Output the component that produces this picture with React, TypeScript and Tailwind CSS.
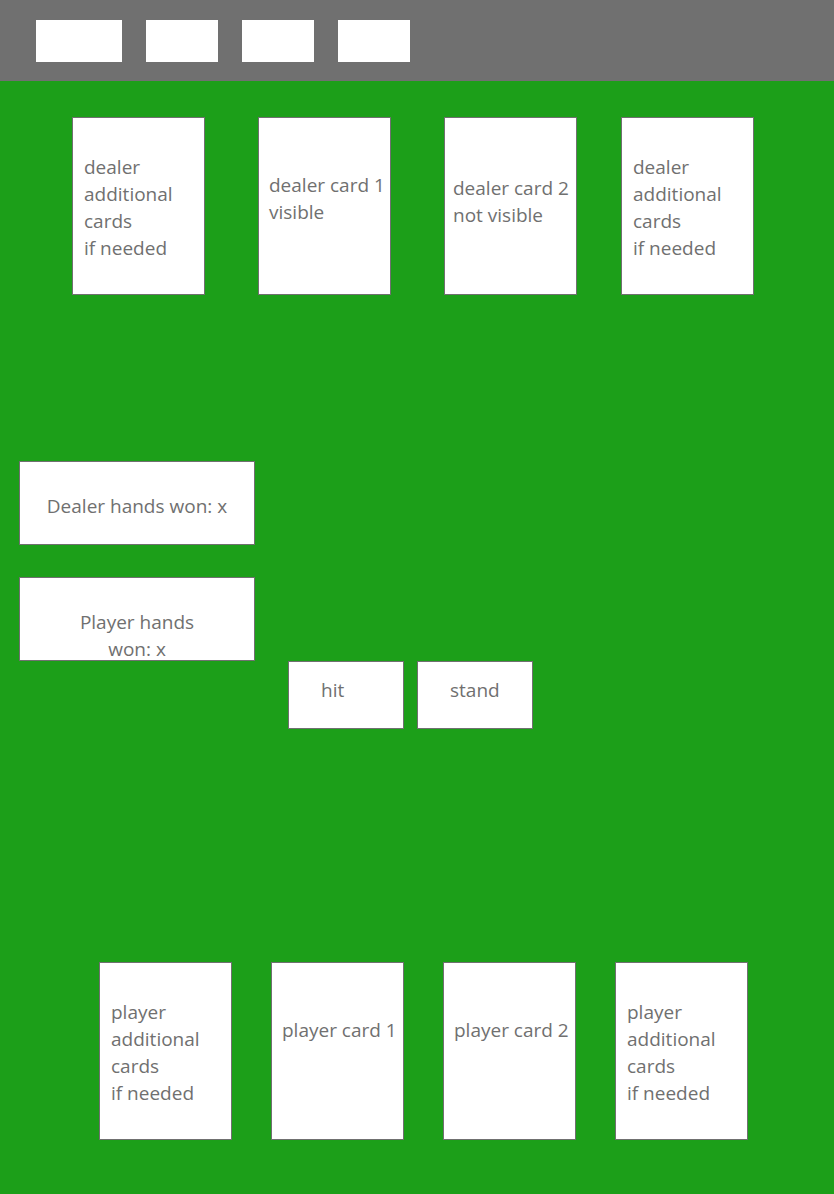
import type { ReactNode } from "react";
import clsx from "clsx";

function Card({ children, className }: { children: ReactNode; className: string }) {
  return (
    <article
      className={clsx(
        "h-[178px] w-[133px] shrink-0 border border-[#707070] bg-white whitespace-nowrap",
        className,
      )}
    >
      <p>{children}</p>
    </article>
  );
}

function AdditionalCard({ owner }: { owner: string }) {
  return (
    <Card className="pt-9 pl-[11px]">
      {owner}
      <br />
      additional
      <br />
      cards
      <br />
      if needed
    </Card>
  );
}

function Score({ children }: { children: ReactNode }) {
  return (
    <div className="h-[84px] w-[236px] border border-[#707070] bg-white pt-[31px] text-center">
      <p>{children}</p>
    </div>
  );
}

function ActionButton({ children }: { children: ReactNode }) {
  return (
    <button
      type="button"
      className="flex h-[68px] w-[116px] items-start border border-[#707070] bg-white pt-[15px] pl-8"
    >
      {children}
    </button>
  );
}

const menuItem = "h-[42px] w-[72px] bg-white";

export default function App() {
  return (
    <div className="flex min-h-screen flex-col bg-[#1c9f19] font-['Open_Sans','Noto_Sans',sans-serif] text-[19px] leading-[27px] text-[#707070]">
      <header className="bg-[#707070] px-9 pt-5 pb-[19px]">
        <nav aria-label="Menu" className="flex gap-6">
          <button type="button" aria-label="Menu item 1" className="h-[42px] w-[86px] bg-white" />
          <button type="button" aria-label="Menu item 2" className={menuItem} />
          <button type="button" aria-label="Menu item 3" className={menuItem} />
          <button type="button" aria-label="Menu item 4" className={menuItem} />
        </nav>
      </header>

      <main className="flex flex-1 flex-col pt-9 pb-[54px]">
        <section aria-label="Dealer hand" className="flex gap-11 pr-20 pl-[72px]">
          <div className="flex flex-1 justify-between">
            <AdditionalCard owner="dealer" />
            <Card className="pt-[54px] pl-[10px]">
              dealer card 1
              <br />
              visible
            </Card>
            <Card className="pt-[57px] pl-2">
              dealer card 2
              <br />
              not visible
            </Card>
          </div>
          <AdditionalCard owner="dealer" />
        </section>

        <section aria-label="Score" className="mt-[166px] flex flex-col gap-8 pl-[19px]">
          <Score>Dealer hands won: x</Score>
          <Score>
            Player hands
            <br />
            won: x
          </Score>
        </section>

        <section aria-label="Actions" className="flex gap-[13px] pl-72">
          <ActionButton>hit</ActionButton>
          <ActionButton>stand</ActionButton>
        </section>

        <section
          aria-label="Player hand"
          className="mt-auto flex justify-between pr-[86px] pl-[99px]"
        >
          <AdditionalCard owner="player" />
          <Card className="pt-[54px] pl-[10px]">player card 1</Card>
          <Card className="pt-[54px] pl-[10px]">player card 2</Card>
          <AdditionalCard owner="player" />
        </section>
      </main>
    </div>
  );
}
